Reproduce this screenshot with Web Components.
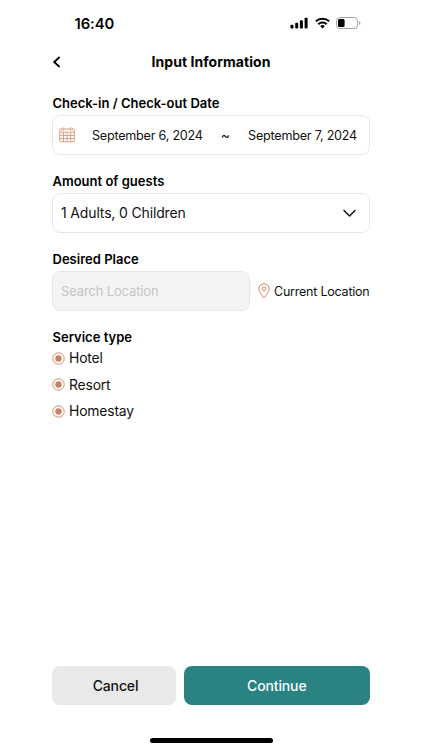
<!DOCTYPE html>
<html lang="en">
<head>
<meta charset="utf-8">
<title>Input Information</title>
<style>
html,body{margin:0;height:100%;background:#fff}
body{font-family:Inter,"Liberation Sans",sans-serif;color:#000}
</style>
</head>
<body>
<booking-screen></booking-screen>
<script>
function define(name, html) {
  customElements.define(name, class extends HTMLElement {
    constructor() {
      super();
      const t = document.createElement('template');
      t.innerHTML = html;
      this.attachShadow({mode: 'open'}).append(t.content.cloneNode(true));
    }
  });
}

define('status-bar', `<style>
:host{display:flex;height:46px;box-sizing:border-box;padding:1px 61px 0 74.5px;align-items:center;justify-content:space-between}
b{font-size:14.8px;font-weight:600;line-height:18px;letter-spacing:-.05px}
.i{display:flex;align-items:center;gap:6.5px;margin-bottom:1px}
svg{display:block}
</style><b>16:40</b><div class="i">
<svg width="18" height="12" viewBox="0 0 18 12"><rect x=".5" y="7.8" width="3" height="3.6" rx=".9"/><rect x="5.2" y="5.8" width="3" height="5.6" rx=".9"/><rect x="9.9" y="3.3" width="3" height="8.1" rx=".9"/><rect x="14.6" y=".7" width="3" height="10.7" rx=".9"/></svg>
<svg width="15" height="12" viewBox="0 0 15 12" fill="none" stroke="#000" stroke-width="2"><path d="M.9 4.3a9.5 9.5 0 0 1 13.2 0M3.3 7.2a6 6 0 0 1 8.4 0"/><path d="M5.2 9.1a3.4 3.4 0 0 1 4.6 0L7.5 11.5z" fill="#000" stroke="none"/></svg>
<svg width="25" height="12" viewBox="0 0 25 12"><rect x=".5" y=".5" width="21" height="11" rx="3.4" fill="none" stroke="#a5a5a5"/><rect x="2" y="2" width="6.6" height="8" rx="1.5"/><path d="M23 4v4c1.9-.6 1.9-3.4 0-4" fill="#a5a5a5"/></svg>
</div>`);

define('page-header', `<style>
:host{display:grid;grid-template-columns:1fr auto 1fr;height:32px;align-items:center;padding:0 52px}
svg{display:block}
h1{margin:0;font-size:14px;line-height:18px;font-weight:700;letter-spacing:.05px}
</style><svg width="10" height="12" viewBox="0 0 10 12" fill="none" stroke="#000" stroke-width="1.8"><path d="M7.6 1 2.2 6l5.4 5"/></svg><h1><slot></slot></h1>`);

define('form-group', `<style>
:host{display:flex;flex-direction:column;gap:2px}
h2{margin:0;font-size:13px;line-height:19px;padding:1px 0 0 .5px;font-weight:600;letter-spacing:.01px}
</style><h2><slot name="label"></slot></h2><slot></slot>`);

define('form-box', `<style>
:host{display:flex;align-items:center;height:40px;box-sizing:border-box;border:1px solid #e8e8e8;border-radius:8px;background:var(--bg,#fff);padding:0 12px 0 8px;font-size:14px;letter-spacing:-.15px;color:var(--fg,#111)}
</style><slot></slot>`);

define('date-range', `<style>
:host{display:flex;align-items:center;flex:1;font-size:12.6px}
svg{display:block;margin:0 17px 0 -2px}
span{white-space:nowrap;letter-spacing:-.23px}
i{font-style:normal;flex:1;text-align:center;font-size:14px;margin-top:-1px}
</style><svg width="16" height="16" viewBox="0 0 16 16" fill="none" stroke="#d99f7e"><rect x=".7" y="2" width="14.6" height="12.8" rx="1"/><path d="M.7 5.2h14.6M.7 8.4h14.6M.7 11.6h14.6M4.4 5.2v9.6M8 5.2v9.6M11.6 5.2v9.6"/><rect x="2.8" y=".8" width="1.8" height="2.6" rx=".7" fill="#fff"/><rect x="11.4" y=".8" width="1.8" height="2.6" rx=".7" fill="#fff"/></svg><span><slot name="from"></slot></span><i>~</i><span><slot name="to"></slot></span>`);

define('chevron-down', `<style>:host{display:block;margin-left:auto}svg{display:block}</style>
<svg width="15" height="9" viewBox="0 0 15 9" fill="none" stroke="#111" stroke-width="1.5" stroke-linecap="round" stroke-linejoin="round"><path d="M2 1.5 7.5 7 13 1.5"/></svg>`);

define('place-row', `<style>
:host{display:grid;grid-template-columns:198px 1fr;gap:8px;align-items:center}
div{display:flex;align-items:center;gap:4px;white-space:nowrap;font-size:12.5px;color:#111;letter-spacing:-.22px}
svg{display:block;flex:none}
</style><slot></slot><div><svg width="12" height="16" viewBox="0 0 12 16" fill="none" stroke="#d38a66"><path d="M6 15C3.8 12 .9 9 .9 5.9a5.1 5.1 0 0 1 10.2 0C11.1 9 8.2 12 6 15z"/><circle cx="6" cy="5.8" r="1.9"/></svg><slot name="action"></slot></div>`);

define('radio-list', `<style>:host{display:flex;flex-direction:column;margin-top:-4px}</style><slot></slot>`);
define('radio-option', `<style>
:host{display:flex;height:26.6px;align-items:center;gap:4px;font-size:13.9px;color:#111;letter-spacing:-.17px}
svg{display:block}
</style><svg width="13" height="13" viewBox="0 0 13 13"><circle cx="6.5" cy="6.5" r="5.7" fill="none" stroke="#d08a69"/><circle cx="6.5" cy="6.5" r="3.2" fill="#c98260"/></svg><span><slot></slot></span>`);

define('action-button', `<style>
:host{display:block}
button{display:block;width:100%;height:39px;border:0;border-radius:8px;background:var(--bg);color:var(--fg);font:500 14px Inter,"Liberation Sans",sans-serif;letter-spacing:-.13px;padding:0 0 0 var(--shift,0)}
</style><button><slot></slot></button>`);

define('booking-screen', `<style>
:host{display:flex;flex-direction:column;height:750px;overflow:hidden}
main{flex:1;display:flex;flex-direction:column;gap:16px;padding:15px 52px 0}
footer{display:grid;grid-template-columns:124px 1fr;gap:7.5px;padding:0 52px}
.home{width:123px;height:4.5px;border-radius:3px;background:#000;margin:33px auto 7.5px}
</style>
<status-bar></status-bar>
<page-header>Input Information</page-header>
<main>
<form-group><span slot="label">Check-in / Check-out Date</span><form-box><date-range><span slot="from">September 6, 2024</span><span slot="to">September 7, 2024</span></date-range></form-box></form-group>
<form-group><span slot="label">Amount of guests</span><form-box><span style="margin-top:-1px">1 Adults, 0 Children</span><chevron-down></chevron-down></form-box></form-group>
<form-group><span slot="label">Desired Place</span><place-row><form-box style="--bg:#f4f4f4;--fg:#c5c5c5;font-size:13px">Search Location</form-box><span slot="action">Current Location</span></place-row></form-group>
<form-group><span slot="label">Service type</span><radio-list><radio-option>Hotel</radio-option><radio-option>Resort</radio-option><radio-option>Homestay</radio-option></radio-list></form-group>
</main>
<footer><action-button style="--bg:#e9e9e9;--fg:#111;--shift:3px">Cancel</action-button><action-button style="--bg:#2a8281;--fg:#f2ffff">Continue</action-button></footer>
<div class="home"></div>`);
</script>
</body>
</html>
